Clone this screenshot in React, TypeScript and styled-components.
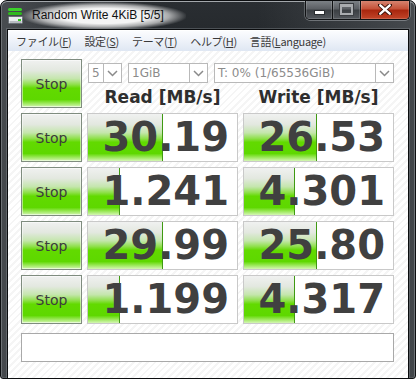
import React from "react";
import styled, { createGlobalStyle } from "styled-components";

const Global = createGlobalStyle`
  html, body { margin: 0; padding: 0; background: #fff; }
  body { font-family: "Liberation Sans", "Noto Sans", sans-serif; }
`;

const Window = styled.div`
  width: 416px;
  height: 379px;
  box-sizing: border-box;
  display: flex;
  flex-direction: column;
  border: 1px solid #0c0e10;
  border-radius: 7px 7px 3px 3px;
  background:
    linear-gradient(90deg, rgba(78, 82, 86, 0.85) 0%, rgba(30, 34, 38, 0) 28%, rgba(30, 34, 38, 0) 62%, rgba(80, 84, 88, 0.75) 100%),
    linear-gradient(180deg, #2a2e32 0%, #15191c 40%, #1a1d21 100%);
  box-shadow: inset 0 1px 0 #a3a7ab, inset 1px 0 0 #6e7276, inset -1px 0 0 #6e7276, inset 0 -1px 0 #55595d;
  overflow: hidden;
`;

const TitleBar = styled.div`
  height: 28px;
  display: flex;
  align-items: flex-start;
  flex-shrink: 0;
`;

const AppIcon = styled.svg`
  margin: 6px 0 0 6px;
  flex-shrink: 0;
`;

const Title = styled.span`
  margin: 1px 0 0 -2px;
  padding: 5px 22px 7px 10px;
  font-size: 12px;
  line-height: 16px;
  color: #111;
  white-space: nowrap;
  background: radial-gradient(
    ellipse at 50% 50%,
    rgba(255, 255, 255, 0.95) 38%,
    rgba(255, 255, 255, 0.6) 56%,
    rgba(255, 255, 255, 0) 72%
  );
`;

const Captions = styled.div`
  margin-left: auto;
  margin-right: 5px;
  margin-top: -1px;
  display: flex;
  border: 1px solid #101214;
  border-top: none;
  border-radius: 0 0 5px 5px;
  overflow: hidden;
  box-shadow: 0 1px 0 rgba(200, 205, 210, 0.4), 1px 0 0 rgba(200, 205, 210, 0.3), -1px 0 0 rgba(200, 205, 210, 0.3);
`;

const CapButton = styled.div<{ $w: number; $close?: boolean }>`
  width: ${(p) => p.$w}px;
  height: 19px;
  display: flex;
  align-items: center;
  justify-content: center;
  box-shadow: inset 0 0 0 1px rgba(255, 255, 255, 0.16);
  background: ${(p) =>
    p.$close
      ? "linear-gradient(180deg, #d88a76 0%, #c5533a 45%, #a9270f 55%, #c24529 100%)"
      : "linear-gradient(180deg, #80858a 0%, #5c6065 45%, #3c4044 55%, #53575c 100%)"};
  & + & {
    border-left: 1px solid #101214;
  }
`;

const MinGlyph = styled.div`
  width: 9px;
  height: 3px;
  margin-top: 5px;
  background: #fff;
  border: 1px solid #2a2d30;
`;

const MaxGlyph = styled.div`
  width: 9px;
  height: 6px;
  border: 2px solid #a9acaf;
  border-top-width: 3px;
  outline: 1px solid #3b3e42;
`;

const Client = styled.div`
  flex: 1;
  margin: 0 6px 5px 6px;
  border: 1px solid #0a0c0e;
  box-shadow: 0 0 0 1px rgba(150, 155, 160, 0.35);
  display: flex;
  flex-direction: column;
  background: repeating-linear-gradient(135deg, #ffffff 0px, #ffffff 3px, #f5f5f5 3px, #f5f5f5 5px);
`;

const MenuBar = styled.div`
  height: 20px;
  display: flex;
  align-items: center;
  gap: 13px;
  padding-left: 8px;
  background: linear-gradient(180deg, #fbfcfe 0%, #eef2f9 50%, #dfe7f3 100%);
  border-top: 1px solid #ffffff;
  font-family: "Noto Sans CJK JP", "Liberation Sans", sans-serif;
  font-size: 11px;
  color: #3a3a3a;
`;

const MenuItem = styled.span`
  white-space: nowrap;
  letter-spacing: -0.3px;
  u { text-decoration: underline; text-underline-offset: 1px; }
`;

const Board = styled.div`
  display: grid;
  grid-template-columns: 61px 151px 151px;
  grid-auto-rows: 49px;
  column-gap: 5px;
  row-gap: 5px;
  padding: 8px 0 0 13px;
`;

const greenFill = `linear-gradient(180deg, #f0f1f0 0%, #e3e8e0 22%, #c4e6ac 40%, #8fe04c 52%, #62da00 60%, #5ed800 84%, #9ae858 92%, #d4f6b4 100%)`;

const StopButton = styled.div`
  box-sizing: border-box;
  border: 1px solid #7f8c7f;
  background: ${greenFill};
  display: flex;
  align-items: center;
  justify-content: center;
  font-family: "DejaVu Sans", sans-serif;
  font-size: 14px;
  color: #3c3c3c;
  box-shadow: inset 0 0 0 1px rgba(255, 255, 255, 0.5);
`;

const Controls = styled.div`
  grid-column: 2 / 4;
  display: grid;
  grid-template-columns: 151px 151px;
  grid-template-rows: 20px 1fr;
  column-gap: 5px;
  padding-top: 4px;
`;

const ComboRow = styled.div`
  grid-column: 1 / 3;
  display: flex;
  gap: 6px;
  padding-left: 1px;
`;

const Combo = styled.div<{ $w: number }>`
  width: ${(p) => p.$w}px;
  box-sizing: border-box;
  height: 20px;
  display: flex;
  border: 1px solid #b9b9b9;
  background: #fff;
  font-family: "DejaVu Sans", sans-serif;
  font-size: 12px;
  color: #8c8c8c;
`;

const ComboText = styled.span`
  flex: 1;
  padding-left: 3px;
  line-height: 18px;
  white-space: nowrap;
  overflow: hidden;
`;

const ComboArrow = styled.div`
  width: 17px;
  border-left: 1px solid #b9b9b9;
  display: flex;
  align-items: center;
  justify-content: center;
`;

const Heading = styled.div`
  text-align: center;
  font-family: "DejaVu Sans", sans-serif;
  font-weight: bold;
  font-size: 17px;
  line-height: 20px;
  color: #2e2e2e;
  padding-top: 4px;
`;

const Result = styled.div`
  position: relative;
  box-sizing: border-box;
  border: 1px solid #c9c9c9;
  background: #fff;
  overflow: hidden;
`;

const Bar = styled.div`
  position: absolute;
  left: 0;
  top: 0;
  bottom: 0;
  background: ${greenFill};
  border-right: 1px solid #3f9a12;
`;

const Value = styled.div`
  position: relative;
  text-align: right;
  padding-right: 8px;
  font-family: "DejaVu Sans", sans-serif;
  font-weight: bold;
  font-size: 40px;
  line-height: 47px;
  color: #404040;
`;

const Comment = styled.div`
  grid-column: 1 / 4;
  height: 29px;
  margin-top: 4px;
  box-sizing: border-box;
  border: 1px solid #a9a9a9;
  background: #fff;
`;

const Chevron = () => (
  <svg width="11" height="7" viewBox="0 0 11 7">
    <polyline points="1,1 5.5,5.5 10,1" fill="none" stroke="#8a8a8a" strokeWidth="1.5" />
  </svg>
);

const rows = [
  { read: "30.19", rw: 74, write: "26.53", ww: 72 },
  { read: "1.241", rw: 31, write: "4.301", ww: 50 },
  { read: "29.99", rw: 74, write: "25.80", ww: 72 },
  { read: "1.199", rw: 31, write: "4.317", ww: 50 },
];

export default function App() {
  return (
    <>
      <Global />
      <Window>
        <TitleBar>
          <AppIcon width="17" height="18" viewBox="0 0 17 18">
            <rect x="1" y="1" width="14" height="3" rx="1.5" fill="#3bd12a" />
            <rect x="1" y="5" width="14" height="3" rx="1.5" fill="#2fb81f" />
            <rect x="1.5" y="9.5" width="14" height="7" rx="1" fill="#e9ecef" stroke="#6a7077" />
            <rect x="2.5" y="14" width="12" height="2" fill="#b7bcc1" />
            <rect x="11" y="12" width="3" height="2" fill="#2ecc1c" />
          </AppIcon>
          <Title>Random Write 4KiB [5/5]</Title>
          <Captions>
            <CapButton $w={26}>
              <MinGlyph />
            </CapButton>
            <CapButton $w={27}>
              <MaxGlyph />
            </CapButton>
            <CapButton $w={48} $close>
              <svg width="14" height="11" viewBox="0 0 14 11">
                <path d="M2 1 L12 10 M12 1 L2 10" stroke="#3a1208" strokeWidth="4.2" strokeLinecap="round" />
                <path d="M2.3 1.3 L11.7 9.7 M11.7 1.3 L2.3 9.7" stroke="#ffffff" strokeWidth="2.4" strokeLinecap="round" />
              </svg>
            </CapButton>
          </Captions>
        </TitleBar>
        <Client>
          <MenuBar>
            <MenuItem>ファイル(<u>F</u>)</MenuItem>
            <MenuItem>設定(<u>S</u>)</MenuItem>
            <MenuItem>テーマ(<u>T</u>)</MenuItem>
            <MenuItem>ヘルプ(<u>H</u>)</MenuItem>
            <MenuItem>言語(<u>L</u>anguage)</MenuItem>
          </MenuBar>
          <Board>
            <StopButton>Stop</StopButton>
            <Controls>
              <ComboRow>
                <Combo $w={34}>
                  <ComboText>5</ComboText>
                  <ComboArrow><Chevron /></ComboArrow>
                </Combo>
                <Combo $w={80}>
                  <ComboText>1GiB</ComboText>
                  <ComboArrow><Chevron /></ComboArrow>
                </Combo>
                <Combo $w={180}>
                  <ComboText>T: 0% (1/65536GiB)</ComboText>
                  <ComboArrow><Chevron /></ComboArrow>
                </Combo>
              </ComboRow>
              <Heading>Read [MB/s]</Heading>
              <Heading>Write [MB/s]</Heading>
            </Controls>
            {rows.map((r) => (
              <React.Fragment key={r.read}>
                <StopButton>Stop</StopButton>
                <Result>
                  <Bar style={{ width: r.rw }} />
                  <Value>{r.read}</Value>
                </Result>
                <Result>
                  <Bar style={{ width: r.ww }} />
                  <Value>{r.write}</Value>
                </Result>
              </React.Fragment>
            ))}
            <Comment />
          </Board>
        </Client>
      </Window>
    </>
  );
}
